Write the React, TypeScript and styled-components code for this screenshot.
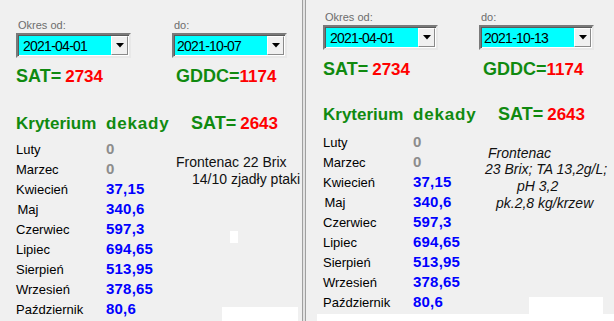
import React from 'react';
import styled, { createGlobalStyle } from 'styled-components';

const Global = createGlobalStyle`
  html, body { margin: 0; padding: 0; background: #ffffff; }
  body { font-family: "Liberation Sans", Arial, sans-serif; }
`;

const Screen = styled.div`
  position: relative;
  width: 614px;
  height: 321px;
  overflow: hidden;
  display: flex;
  background: #f0f0f0;
`;

const Panel = styled.section<{ $w: number; $top: number; $left: number }>`
  position: relative;
  flex: none;
  width: ${(p) => p.$w}px;
  height: 321px;
  box-sizing: border-box;
  padding: ${(p) => p.$top}px 0 0 ${(p) => p.$left}px;
  display: flex;
  flex-direction: column;
  align-items: flex-start;
`;

const Divider = styled.div`
  flex: none;
  width: 4px;
  height: 321px;
  box-sizing: border-box;
  border-left: 1px solid #a0a0a0;
  border-right: 1px solid #a0a0a0;
  background: #e3e3e3;
`;

const FieldRow = styled.div`
  display: flex;
`;

const Field = styled.div`
  flex: none;
  width: 156px;
  display: flex;
  flex-direction: column;
`;

const Label = styled.span`
  font-size: 11px;
  line-height: 13px;
  height: 13px;
  margin-bottom: 1px;
  padding-left: 2px;
  color: #6d6d6d;
`;

const Combo = styled.div`
  width: 115px;
  height: 25px;
  box-sizing: border-box;
  display: flex;
  border: 2px solid;
  border-color: #7a7a7a #e8e8e8 #e8e8e8 #7a7a7a;
  box-shadow: inset 1px 1px 0 #5a5a5a;
  background: #ffffff;
`;

const ComboText = styled.div<{ $pad: number }>`
  flex: 1;
  margin: 1px 0 1px 1px;
  background: #00ffff;
  font-size: 14px;
  letter-spacing: -0.75px;
  line-height: 20px;
  padding-left: ${(p) => p.$pad}px;
  color: #000;
`;

const ComboButton = styled.div`
  width: 17px;
  margin: 1px 1px 1px 0;
  box-sizing: border-box;
  background: #f0f0f0;
  border: 1px solid;
  border-color: #ffffff #8a8a8a #8a8a8a #ffffff;
  display: flex;
  align-items: center;
  justify-content: center;
`;

const StatRow = styled.div<{ $mt: number }>`
  display: flex;
  margin-top: ${(p) => p.$mt}px;
  height: 20px;
`;

const Stat = styled.div<{ $indent: number }>`
  flex: none;
  width: 156px;
  padding-left: ${(p) => p.$indent}px;
  box-sizing: border-box;
  display: flex;
  align-items: baseline;
  line-height: 20px;
  white-space: nowrap;
`;

const StatName = styled.span<{ $size: number }>`
  color: #108a10;
  font-weight: bold;
  font-size: ${(p) => p.$size}px;
`;

const StatValue = styled.span<{ $size: number; $gap: number }>`
  color: #ff0000;
  font-weight: bold;
  font-size: ${(p) => p.$size}px;
  margin-left: ${(p) => p.$gap}px;
`;

const Heading = styled.div<{ $mt: number }>`
  display: flex;
  align-items: baseline;
  margin-top: ${(p) => p.$mt}px;
  height: 20px;
  line-height: 20px;
  white-space: nowrap;
`;

const HeadWord = styled.span<{ $w: number; $ls: number }>`
  flex: none;
  width: ${(p) => p.$w}px;
  color: #108a10;
  font-weight: bold;
  font-size: 17px;
  letter-spacing: ${(p) => p.$ls}px;
`;

const Body = styled.div<{ $mt: number }>`
  display: flex;
  margin-top: ${(p) => p.$mt}px;
`;

const MonthGrid = styled.div`
  width: 160px;
  flex: none;
  display: grid;
  grid-template-columns: 90px auto;
  grid-auto-rows: 20px;
  align-items: baseline;
`;

const MonthName = styled.span<{ $indent: number }>`
  font-size: 13px;
  line-height: 20px;
  color: #000;
  padding-left: ${(p) => p.$indent}px;
`;

const MonthValue = styled.span<{ $zero: boolean }>`
  font-size: 15px;
  line-height: 20px;
  font-weight: bold;
  letter-spacing: 0.2px;
  color: ${(p) => (p.$zero ? '#8c8c8c' : '#0000ff')};
`;

const Note = styled.div<{ $mt: number; $ml: number; $italic: boolean; $lh: number }>`
  margin-top: ${(p) => p.$mt}px;
  margin-left: ${(p) => p.$ml}px;
  font-size: 14px;
  line-height: ${(p) => p.$lh}px;
  font-style: ${(p) => (p.$italic ? 'italic' : 'normal')};
  color: #111;
  white-space: nowrap;
  display: flex;
  flex-direction: column;
`;

const NoteLine = styled.span<{ $indent: number }>`
  padding-left: ${(p) => p.$indent}px;
`;

const Patch = styled.div<{ $x: number; $y: number; $w: number; $h: number }>`
  position: absolute;
  left: ${(p) => p.$x}px;
  top: ${(p) => p.$y}px;
  width: ${(p) => p.$w}px;
  height: ${(p) => p.$h}px;
  background: #ffffff;
`;

const Arrow = () => (
  <svg width="8" height="5" viewBox="0 0 8 5">
    <path d="M0 0H8L4 4.5Z" fill="#000" />
  </svg>
);

const months: [string, string][] = [
  ['Luty', '0'],
  ['Marzec', '0'],
  ['Kwiecień', '37,15'],
  ['Maj', '340,6'],
  ['Czerwiec', '597,3'],
  ['Lipiec', '694,65'],
  ['Sierpień', '513,95'],
  ['Wrzesień', '378,65'],
  ['Październik', '80,6'],
];

type Layout = {
  w: number;
  top: number;
  left: number;
  from: string;
  to: string;
  statMt: number;
  headMt: number;
  bodyMt: number;
  note: { mt: number; ml: number; italic: boolean; lh: number; lines: [string, number][] };
};

const layouts: Layout[] = [
  {
    w: 302,
    top: 19,
    left: 16,
    from: '2021-04-01',
    to: '2021-10-07',
    statMt: 7.5,
    headMt: 27,
    bodyMt: 6,
    note: {
      mt: 15,
      ml: 0,
      italic: false,
      lh: 17,
      lines: [
        ['Frontenac 22 Brix', 0],
        ['14/10 zjadły ptaki', 16],
      ],
    },
  },
  {
    w: 308,
    top: 11,
    left: 17,
    from: '2021-04-01',
    to: '2021-10-13',
    statMt: 8.5,
    headMt: 25.5,
    bodyMt: 7.5,
    note: {
      mt: 13,
      ml: 2,
      italic: true,
      lh: 16.7,
      lines: [
        ['Frontenac', 3],
        ['23 Brix; TA 13,2g/L;', 0],
        ['pH 3,2', 32],
        ['pk.2,8 kg/krzew', 11],
      ],
    },
  },
];

const FormPanel = ({ l }: { l: Layout }) => (
  <Panel $w={l.w} $top={l.top} $left={l.left}>
    <FieldRow>
      <Field>
        <Label>Okres od:</Label>
        <Combo>
          <ComboText $pad={4}>{l.from}</ComboText>
          <ComboButton>
            <Arrow />
          </ComboButton>
        </Combo>
      </Field>
      <Field>
        <Label>do:</Label>
        <Combo>
          <ComboText $pad={2}>{l.to}</ComboText>
          <ComboButton>
            <Arrow />
          </ComboButton>
        </Combo>
      </Field>
    </FieldRow>
    <StatRow $mt={l.statMt}>
      <Stat $indent={0}>
        <StatName $size={18}>SAT=</StatName>
        <StatValue $size={17} $gap={4}>2734</StatValue>
      </Stat>
      <Stat $indent={4}>
        <StatName $size={18}>GDDC=</StatName>
        <StatValue $size={17} $gap={0}>1174</StatValue>
      </Stat>
    </StatRow>
    <Heading $mt={l.headMt}>
      <HeadWord $w={90} $ls={0}>Kryterium</HeadWord>
      <HeadWord $w={85} $ls={0.8}>dekady</HeadWord>
      <StatName $size={18}>SAT=</StatName>
      <StatValue $size={17} $gap={4}>2643</StatValue>
    </Heading>
    <Body $mt={l.bodyMt}>
      <MonthGrid>
        {months.map(([m, v]) => (
          <React.Fragment key={m}>
            <MonthName $indent={m === 'Maj' ? 1.5 : 0}>{m}</MonthName>
            <MonthValue $zero={v === '0'}>{v}</MonthValue>
          </React.Fragment>
        ))}
      </MonthGrid>
      <Note $mt={l.note.mt} $ml={l.note.ml} $italic={l.note.italic} $lh={l.note.lh}>
        {l.note.lines.map(([t, i]) => (
          <NoteLine key={t} $indent={i}>
            {t}
          </NoteLine>
        ))}
      </Note>
    </Body>
  </Panel>
);

export default function App() {
  return (
    <>
      <Global />
      <Screen>
        <FormPanel l={layouts[0]} />
        <Divider />
        <FormPanel l={layouts[1]} />
        <Patch $x={230} $y={231} $w={8} $h={12} />
        <Patch $x={222} $y={307} $w={76} $h={14} />
        <Patch $x={529} $y={297} $w={74} $h={24} />
        <Patch $x={317} $y={314} $w={297} $h={7} />
      </Screen>
    </>
  );
}
